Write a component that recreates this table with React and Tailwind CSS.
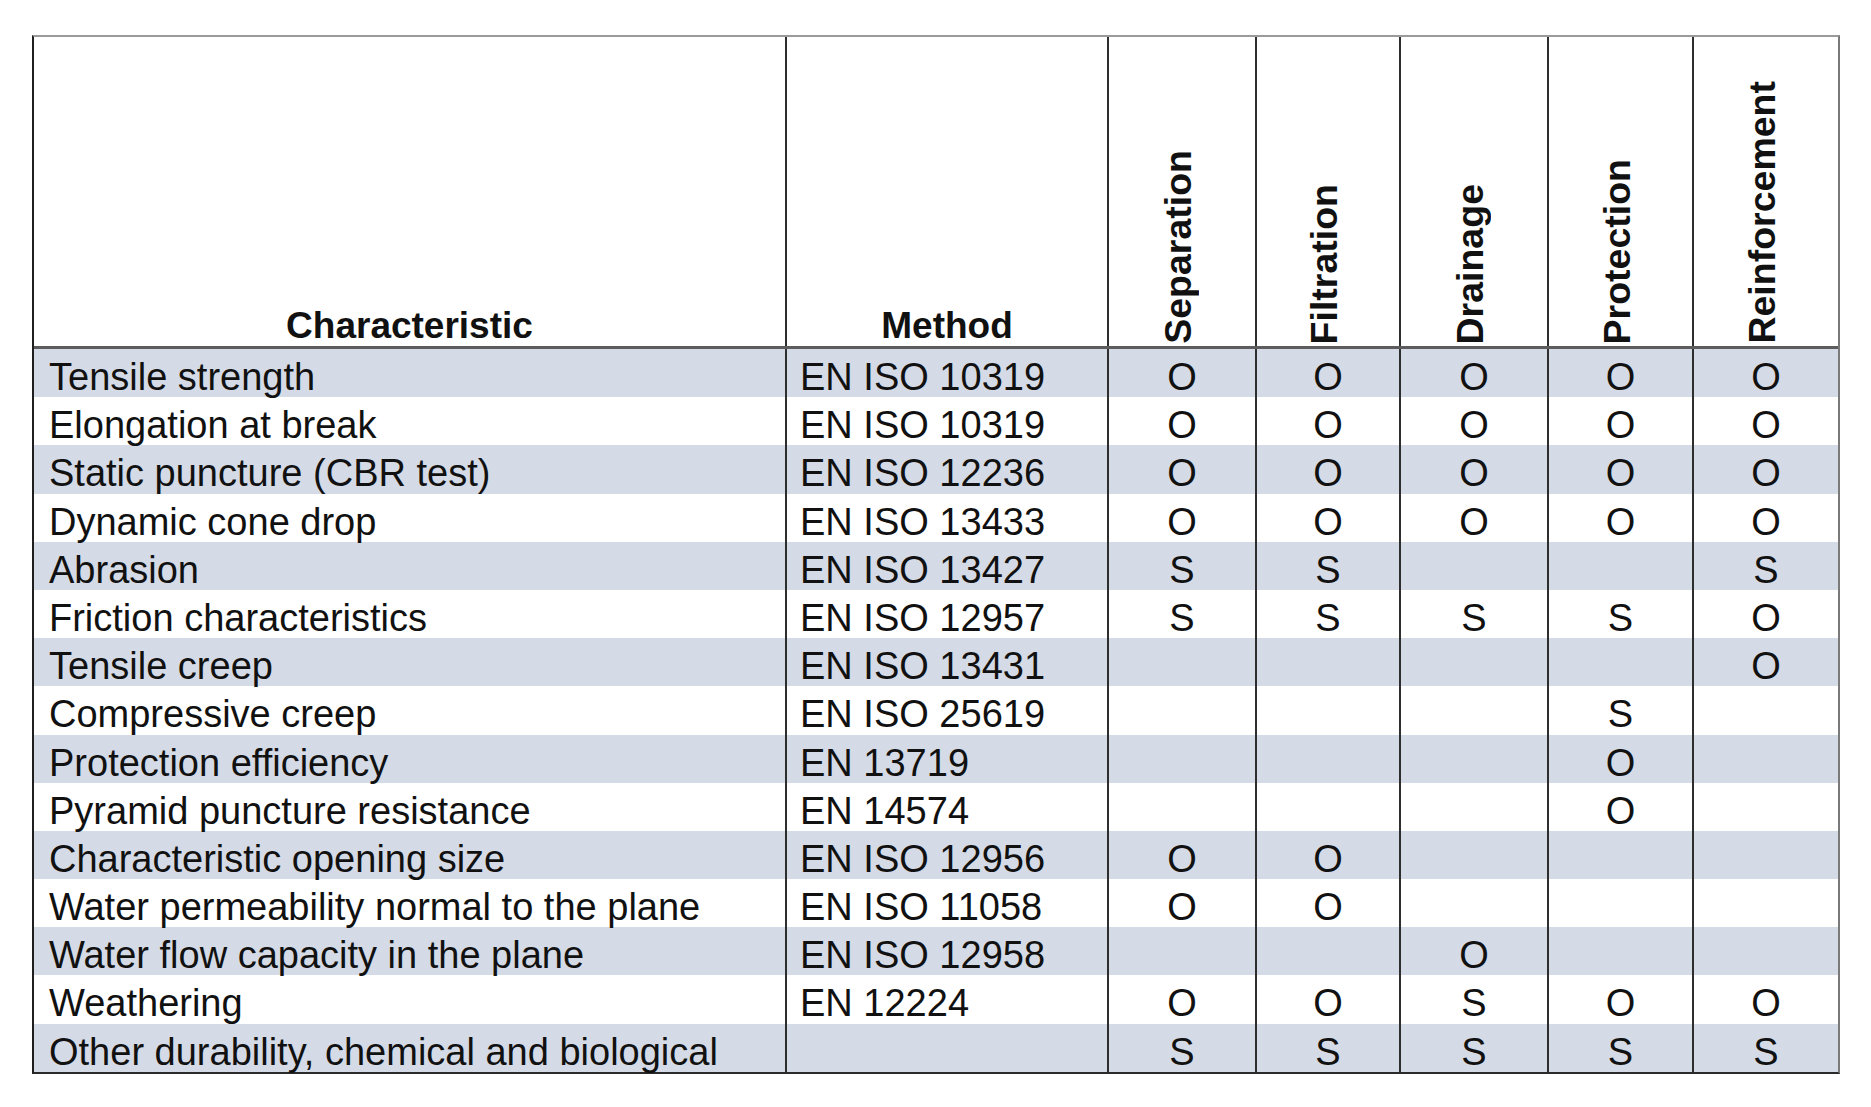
const uses = ['Separation', 'Filtration', 'Drainage', 'Protection', 'Reinforcement'];

// widths include the 2px left rule of each column
const useWidths = ['w-[148px]', 'w-[144px]', 'w-[148px]', 'w-[145px]', 'w-[146px]'];

const rows = [
    ['Tensile strength', 'EN ISO 10319', 'O', 'O', 'O', 'O', 'O'],
    ['Elongation at break', 'EN ISO 10319', 'O', 'O', 'O', 'O', 'O'],
    ['Static puncture (CBR test)', 'EN ISO 12236', 'O', 'O', 'O', 'O', 'O'],
    ['Dynamic cone drop', 'EN ISO 13433', 'O', 'O', 'O', 'O', 'O'],
    ['Abrasion', 'EN ISO 13427', 'S', 'S', '', '', 'S'],
    ['Friction characteristics', 'EN ISO 12957', 'S', 'S', 'S', 'S', 'O'],
    ['Tensile creep', 'EN ISO 13431', '', '', '', '', 'O'],
    ['Compressive creep', 'EN ISO 25619', '', '', '', 'S', ''],
    ['Protection efficiency', 'EN 13719', '', '', '', 'O', ''],
    ['Pyramid puncture resistance', 'EN 14574', '', '', '', 'O', ''],
    ['Characteristic opening size', 'EN ISO 12956', 'O', 'O', '', '', ''],
    ['Water permeability normal to the plane', 'EN ISO 11058', 'O', 'O', '', '', ''],
    ['Water flow capacity in the plane', 'EN ISO 12958', '', '', 'O', '', ''],
    ['Weathering', 'EN 12224', 'O', 'O', 'S', 'O', 'O'],
    ['Other durability, chemical and biological', '', 'S', 'S', 'S', 'S', 'S'],
];

export default function App() {
    return (
        <div className="w-full h-[1107px] bg-white pt-[35px] pl-[32px] font-['Liberation_Sans',Arial,sans-serif] text-[38px] text-[#111]">
            <div className="w-[1808px] border-2 border-t-[#9a9a9a] border-l-[#1f1f1f] border-r-[#7a7a7a] border-b-[#2a2a2a]">
                {/* header */}
                <div className="flex h-[312px] border-b-[3px] border-[#5c5c5c] font-bold text-[37px]">
                    <div className="w-[751px] flex items-end justify-center">
                        <span className="leading-[40px]">Characteristic</span>
                    </div>
                    <div className="w-[322px] border-l-2 border-[#2e2e2e] flex items-end justify-center">
                        <span className="leading-[40px]">Method</span>
                    </div>
                    {uses.map((u, i) => (
                        <div key={u} className={`${useWidths[i]} border-l-2 border-[#2e2e2e] flex items-end justify-center pb-[2px] pr-[8px]`}>
                            <span className="[writing-mode:vertical-rl] rotate-180 leading-[40px] whitespace-nowrap text-[37.5px]">{u}</span>
                        </div>
                    ))}
                </div>

                {/* body */}
                {rows.map((r, idx) => (
                    <div key={r[0]} className={`flex h-[48.2px] ${idx % 2 === 0 ? 'bg-[#d5dbe6]' : 'bg-white'}`}>
                        <div className="w-[751px] pl-[15px] pt-[8px] leading-[40px] whitespace-nowrap">{r[0]}</div>
                        <div className="w-[322px] border-l-2 border-[#2e2e2e] pl-[13px] pt-[8px] leading-[40px] whitespace-nowrap">{r[1]}</div>
                        {r.slice(2).map((v, i) => (
                            <div key={i} className={`${useWidths[i]} border-l-2 border-[#2e2e2e] pt-[8px] leading-[40px] text-center`}>{v}</div>
                        ))}
                    </div>
                ))}
            </div>
        </div>
    );
}
